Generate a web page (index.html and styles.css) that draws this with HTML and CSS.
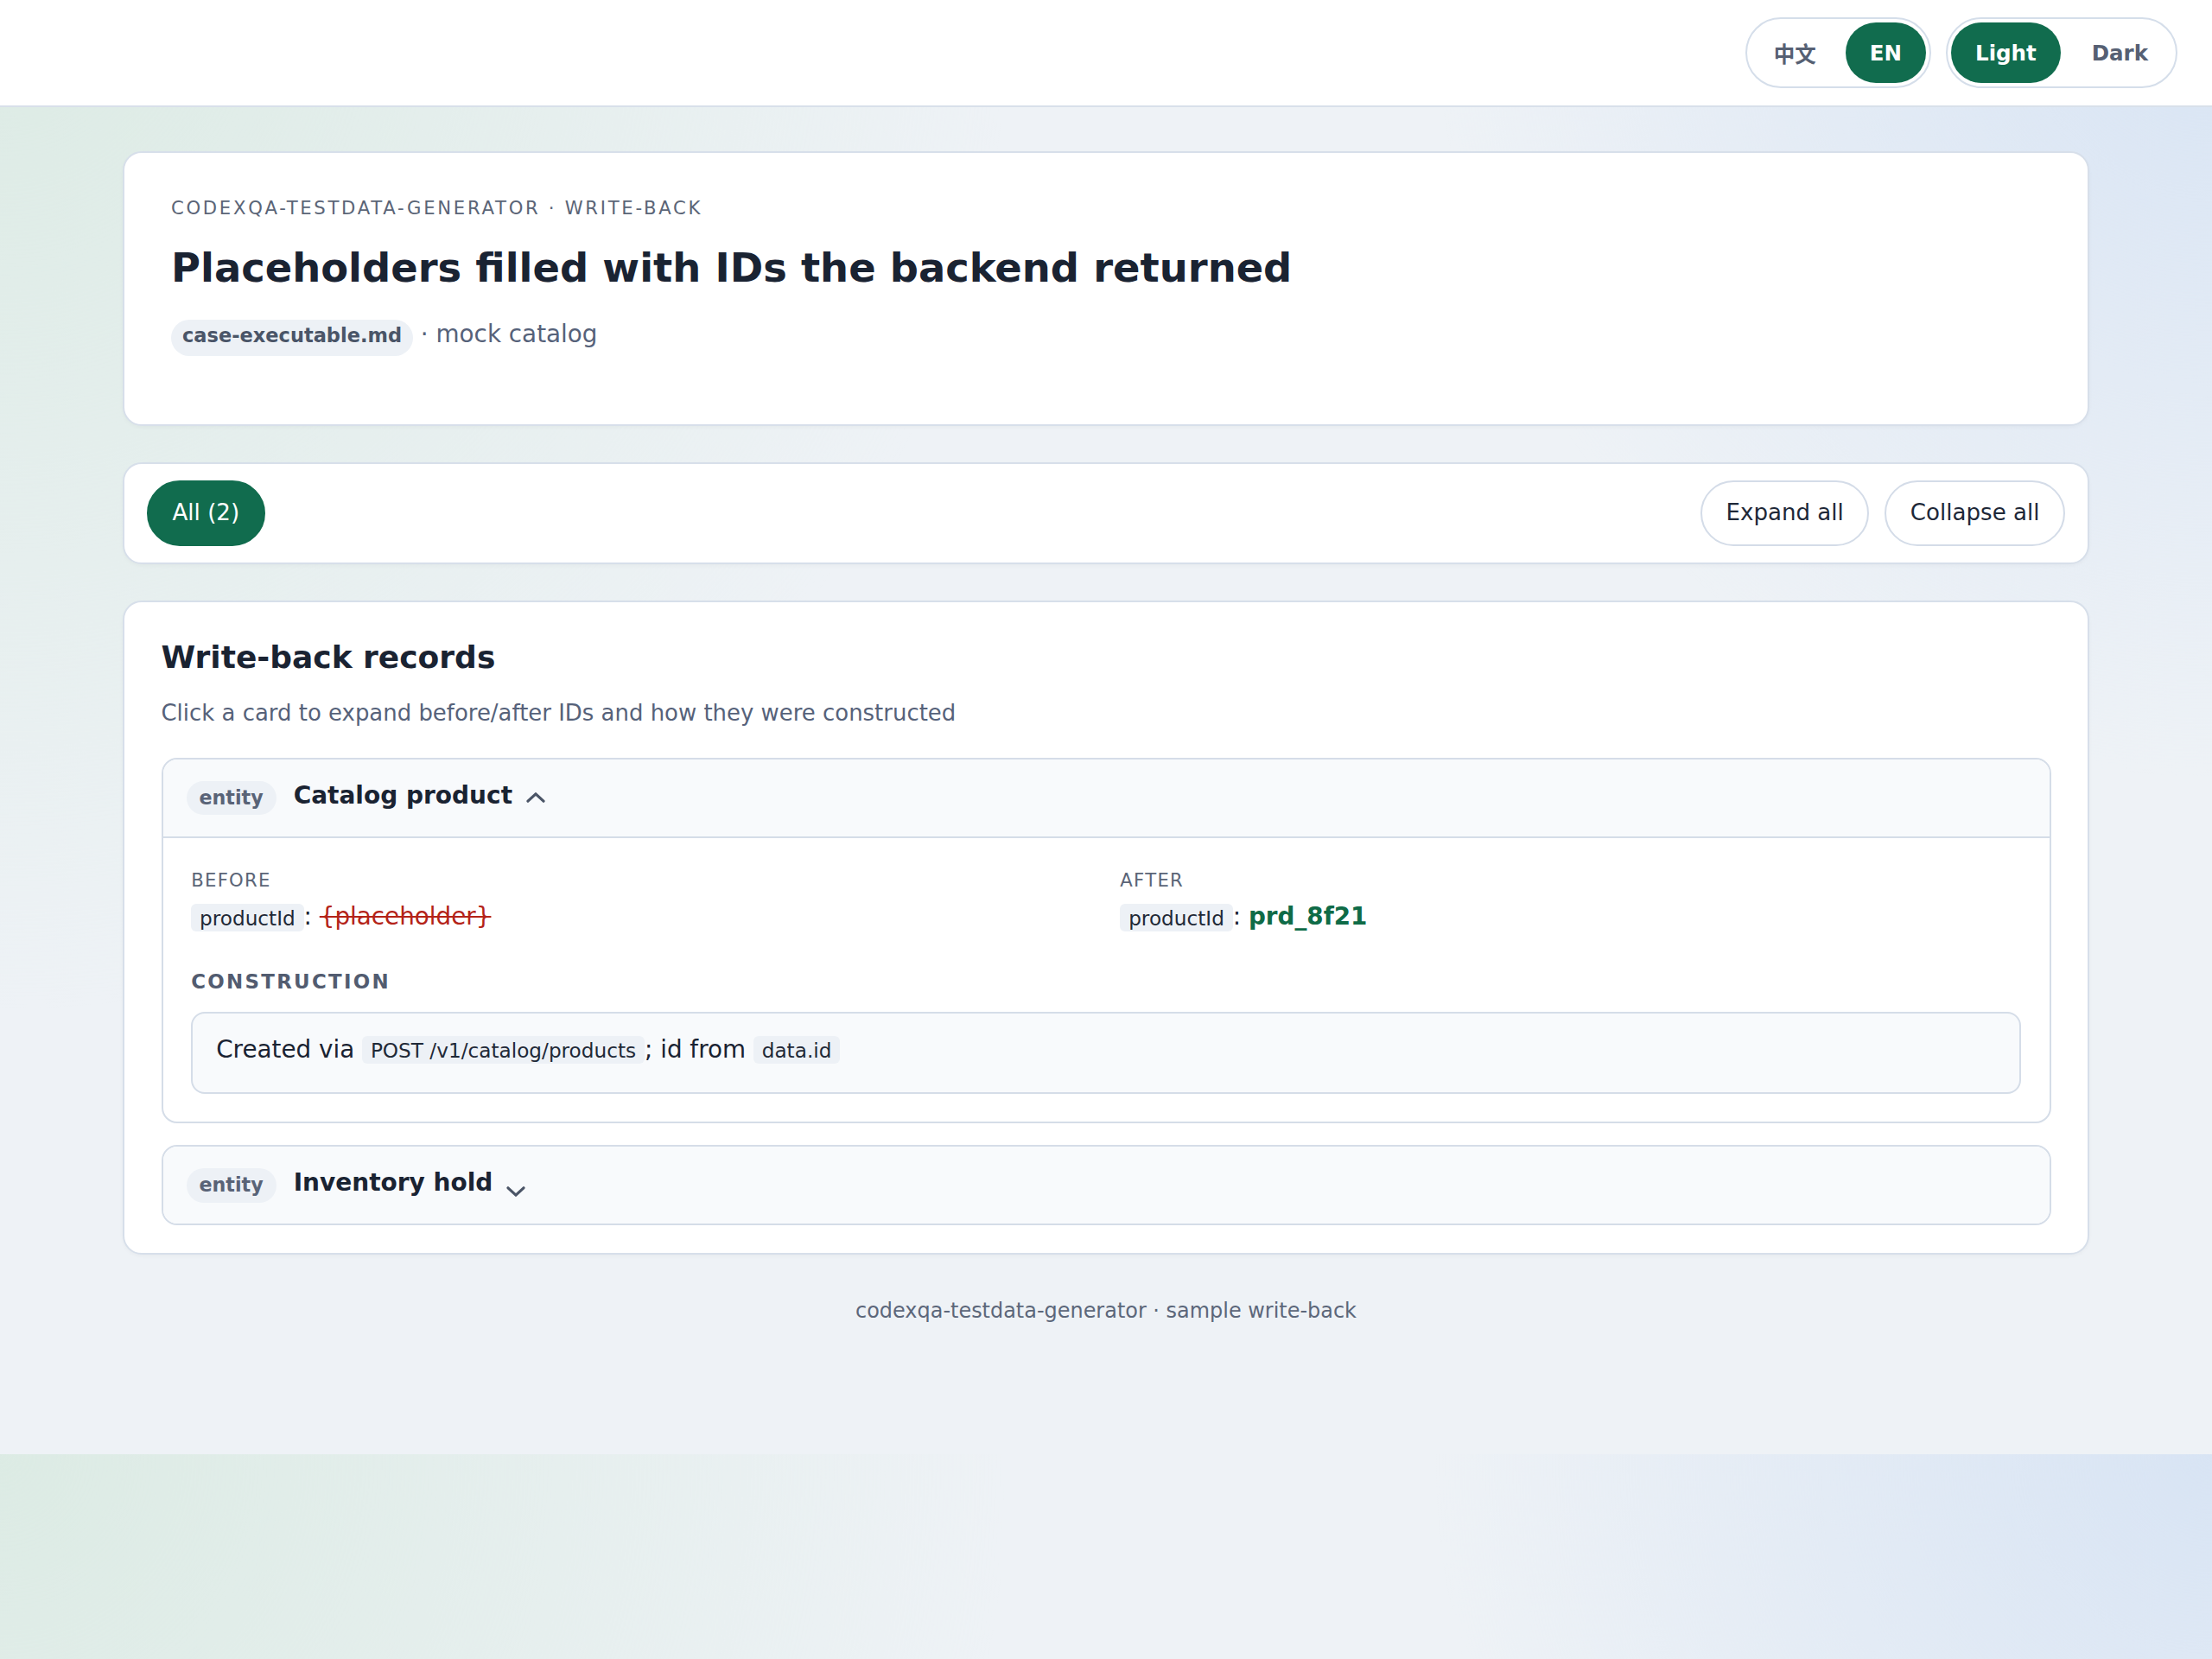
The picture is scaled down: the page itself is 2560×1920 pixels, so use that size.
FILE: index.html
```html
<!DOCTYPE html>
<html lang="en">
<head>
<meta charset="utf-8">
<title>Write-back records</title>
<link rel="stylesheet" href="styles.css">
</head>
<body>
<header class="topbar">
  <div class="seg">
    <button class="seg-btn seg-cjk">中文</button>
    <button class="seg-btn is-active">EN</button>
  </div>
  <div class="seg">
    <button class="seg-btn is-active">Light</button>
    <button class="seg-btn">Dark</button>
  </div>
</header>

<main class="page">
  <section class="card hero">
    <p class="eyebrow">CODEXQA-TESTDATA-GENERATOR · WRITE-BACK</p>
    <h1 class="hero-title">Placeholders filled with IDs the backend returned</h1>
    <div class="meta"><span class="file-chip">case-executable.md</span> · mock catalog</div>
  </section>

  <section class="card toolbar">
    <button class="pill is-active">All (2)</button>
    <div class="actions">
      <button class="pill">Expand all</button>
      <button class="pill">Collapse all</button>
    </div>
  </section>

  <section class="card records">
    <h2 class="records-title">Write-back records</h2>
    <p class="records-sub">Click a card to expand before/after IDs and how they were constructed</p>

    <div class="rec-list">
      <article class="rec open">
        <div class="rec-head">
          <span class="entity">entity</span>
          <span class="rec-title">Catalog product</span>
          <svg class="chev" viewBox="0 0 22 12" aria-hidden="true"><path d="M2 10.2 L11 1.8 L20 10.2" fill="none" stroke="currentColor" stroke-width="3.2" stroke-linecap="round" stroke-linejoin="round"/></svg>
        </div>
        <div class="rec-body">
          <div class="cols">
            <div class="col">
              <div class="label">BEFORE</div>
              <div class="value"><code class="code">productId</code>: <span class="old">{placeholder}</span></div>
            </div>
            <div class="col">
              <div class="label">AFTER</div>
              <div class="value"><code class="code">productId</code>: <span class="new">prd_8f21</span></div>
            </div>
          </div>
          <div class="section-label">CONSTRUCTION</div>
          <div class="how">Created via <code class="code">POST /v1/catalog/products</code>; id from <code class="code">data.id</code></div>
        </div>
      </article>

      <article class="rec">
        <div class="rec-head">
          <span class="entity">entity</span>
          <span class="rec-title">Inventory hold</span>
          <svg class="chev down" viewBox="0 0 22 12" aria-hidden="true"><path d="M2 1.8 L11 10.2 L20 1.8" fill="none" stroke="currentColor" stroke-width="3.2" stroke-linecap="round" stroke-linejoin="round"/></svg>
        </div>
      </article>
    </div>
  </section>
</main>

<footer class="foot">codexqa-testdata-generator · sample write-back</footer>
</body>
</html>
```

FILE: styles.css
```css
* {
  box-sizing: border-box;
}

html {
  background-color: #eef2f6;
  background-image:
    radial-gradient(circle 1300px at 0 0, #dcebe4, rgba(220, 235, 228, 0) 90%),
    radial-gradient(circle 1000px at 100% 0, #d8e4f4, rgba(216, 228, 244, 0) 90%);
}

body {
  margin: 0;
  font-family: "DejaVu Sans", "Noto Sans CJK SC", sans-serif;
  color: #1a2332;
}

button {
  font-family: inherit;
  cursor: pointer;
}

/* top bar */
.topbar {
  display: flex;
  justify-content: flex-end;
  align-items: center;
  gap: 17px;
  height: 124px;
  padding: 0 40px;
  background: #ffffff;
  border-bottom: 2px solid #d8e0ea;
}

.seg {
  display: flex;
  gap: 8px;
  padding: 4px;
  border: 2px solid #d5deea;
  border-radius: 999px;
  background: #ffffff;
}

.seg-btn {
  height: 70px;
  padding: 0 28px;
  border: 0;
  border-radius: 999px;
  background: transparent;
  color: #566073;
  font-size: 24.5px;
  font-weight: 700;
}

.seg-btn.seg-cjk {
  padding: 0 26px 0 27px;
}

.seg-btn.is-active {
  background: #116c4e;
  color: #ffffff;
}

/* page */
.page {
  max-width: 2276px;
  margin: 0 auto;
  padding-top: 51px;
  display: flex;
  flex-direction: column;
  gap: 42px;
}

.card {
  background: #ffffff;
  border: 2px solid #d7dfea;
  border-radius: 22px;
  box-shadow: 0 2px 4px rgba(15, 23, 42, 0.03);
}

/* hero */
.hero {
  padding: 48px 54px 79px;
}

.eyebrow {
  margin: 0;
  font-size: 21.2px;
  line-height: 32px;
  letter-spacing: 0.127em;
  color: #5b6577;
}

.hero-title {
  margin: 25px 0 0;
  font-size: 46.4px;
  line-height: 56px;
  font-weight: 700;
  color: #1a2332;
}

.meta {
  margin-top: 32px;
  font-size: 27.8px;
  line-height: 32.9px;
  color: #56627a;
}

.file-chip {
  display: inline-block;
  padding: 5px 13px 11px;
  font-size: 22.5px;
  line-height: 26px;
  font-weight: 700;
  color: #4a5568;
  background: #edf1f6;
  border-radius: 999px;
}

/* toolbar */
.toolbar {
  display: flex;
  justify-content: space-between;
  align-items: center;
  padding: 19px 26px;
}

.actions {
  display: flex;
  gap: 18px;
}

.pill {
  padding: 17px 27.5px 18px;
  border: 2px solid #d4dce8;
  border-radius: 999px;
  background: #ffffff;
  color: #1e2838;
  font-size: 26.1px;
  line-height: 36.6px;
}

.pill.is-active {
  background: #116c4e;
  border-color: #116c4e;
  color: #ffffff;
}

/* records */
.records {
  padding: 41px 42.5px 32px;
}

.records-title {
  margin: 0;
  font-size: 36px;
  line-height: 46.8px;
  font-weight: 700;
  color: #1a2332;
}

.records-sub {
  margin: 21.6px 0 0;
  font-size: 25.95px;
  line-height: 39.2px;
  color: #56627a;
}

.rec-list {
  margin-top: 31.7px;
  display: flex;
  flex-direction: column;
  gap: 25px;
}

.rec {
  border: 2px solid #d5dde8;
  border-radius: 18px;
  overflow: hidden;
  background: #ffffff;
}

.rec-head {
  display: flex;
  align-items: center;
  gap: 20px;
  padding: 24px 27px;
  background: #f8fafc;
}

.rec.open .rec-head {
  border-bottom: 2px solid #d5dde8;
}

.entity {
  padding: 6px 15px 7.5px;
  font-size: 22.2px;
  line-height: 26px;
  font-weight: 700;
  color: #596377;
  background: #edf1f6;
  border-radius: 999px;
}

.rec-title {
  padding-bottom: 5px;
  font-size: 28px;
  line-height: 36px;
  font-weight: 700;
  color: #1a2332;
}

.chev {
  flex: none;
  width: 22px;
  height: 12px;
  margin-left: -4px;
  color: #4b5567;
}

.chev.down {
  margin-top: 14px;
}

.rec-body {
  padding: 33.5px 32.7px 32px;
}

.cols {
  display: grid;
  grid-template-columns: 1fr 1fr;
  gap: 32.7px;
}

.label {
  font-size: 21.2px;
  line-height: 32px;
  letter-spacing: 0.06em;
  color: #5b6577;
}

.value {
  margin-top: 5px;
  font-size: 27.8px;
  line-height: 41.1px;
  color: #1a2332;
}

.code {
  font-family: inherit;
  font-size: 23.2px;
  padding: 2.5px 9.8px;
  background: #edf1f6;
  border-radius: 6px;
  color: #1f2937;
}

.old {
  color: #b42318;
  text-decoration: line-through;
}

.new {
  color: #0f6b47;
  font-weight: 700;
}

.section-label {
  margin-top: 36.5px;
  font-size: 22.9px;
  line-height: 34.3px;
  font-weight: 700;
  letter-spacing: 0.1em;
  color: #525c70;
}

.how {
  margin-top: 17.6px;
  padding: 23px 27px 29px;
  border: 2px solid #d5dde8;
  border-radius: 16px;
  background: #f8fafc;
  font-size: 27.8px;
  line-height: 38.4px;
  color: #1a2332;
}

/* footer */
.foot {
  padding: 48px 0 147px;
  text-align: center;
  font-size: 23.95px;
  line-height: 35.5px;
  color: #5c677a;
}
```
